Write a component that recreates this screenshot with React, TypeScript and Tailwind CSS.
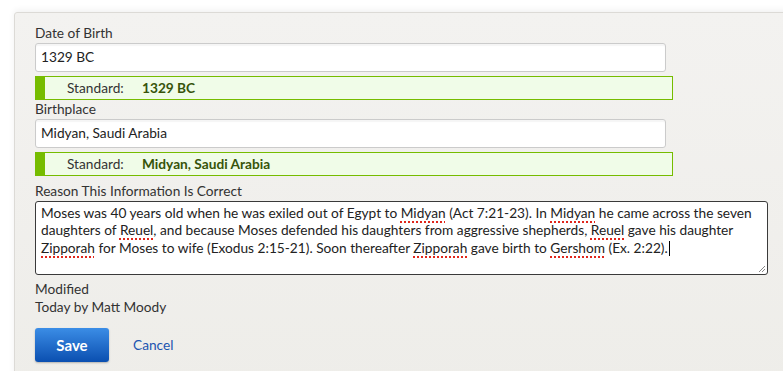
import React from "react";

const font = { fontFamily: "Lato, 'Open Sans', sans-serif" };

function Spell({ children }: { children: React.ReactNode }) {
  return (
    <span className="underline decoration-dotted decoration-[#e0261b] decoration-2 underline-offset-[3px]">
      {children}
    </span>
  );
}

function Standard({ value }: { value: string }) {
  return (
    <div className="flex h-[24px] w-[638px] items-center border border-[#76bc00] bg-[#f0fce8] text-[13.7px]">
      <div className="h-full w-[9px] bg-[#76bc00]" />
      <span className="ml-[22px] w-[75px] text-[#333]">Standard:</span>
      <span className="font-bold text-[#37540a]">{value}</span>
    </div>
  );
}

function TextInput({ value }: { value: string }) {
  return (
    <div className="flex h-[29px] w-[631px] items-center rounded-[3px] border border-[#cbcbcb] bg-white px-[5px] text-[13.7px] text-[#222] shadow-[inset_0_2px_1px_rgba(0,0,0,0.04)]">
      {value}
    </div>
  );
}

export default function App() {
  return (
    <div className="h-[371px] w-[783px] overflow-hidden bg-white pt-[12px] pl-[14px]" style={font}>
      <div className="h-[380px] w-[800px] rounded-tl-[3px] border border-[#dcdad6] bg-gradient-to-b from-[#f3f2f0] to-[#eeede9] pl-[20px] pt-[12px] text-[#333] shadow-[0_-2px_6px_rgba(0,0,0,0.06)]">
        <div className="text-[13.7px] leading-[16px]">Date of Birth</div>
        <div className="mt-[2px]">
          <TextInput value="1329 BC" />
        </div>
        <div className="mt-[4px]">
          <Standard value="1329 BC" />
        </div>
        <div className="mt-px text-[13.7px] leading-[16px]">Birthplace</div>
        <div className="mt-[2px]">
          <TextInput value="Midyan, Saudi Arabia" />
        </div>
        <div className="mt-[4px]">
          <Standard value="Midyan, Saudi Arabia" />
        </div>
        <div className="mt-[7px] text-[13.7px] leading-[16px]">Reason This Information Is Correct</div>
        <div className="relative mt-[2px] h-[74px] w-[733px] rounded-[3px] border border-[#3a3a3a] bg-white px-[5px] pt-[2px] text-[13.7px] leading-[17px] text-[#222]">
          <div className="whitespace-nowrap">
            Moses was 40 years old when he was exiled out of Egypt to <Spell>Midyan</Spell> (Act 7:21-23). In{" "}
            <Spell>Midyan</Spell> he came across the seven
          </div>
          <div className="whitespace-nowrap">
            daughters of <Spell>Reuel</Spell>, and because Moses defended his daughters from aggressive shepherds,{" "}
            <Spell>Reuel</Spell> gave his daughter
          </div>
          <div className="whitespace-nowrap">
            <Spell>Zipporah</Spell> for Moses to wife (Exodus 2:15-21). Soon thereafter <Spell>Zipporah</Spell> gave
            birth to <Spell>Gershom</Spell> (Ex. 2:22).
            <span className="ml-[1px] inline-block h-[15px] w-px translate-y-[3px] bg-black" />
          </div>
          <svg className="absolute right-[1px] bottom-[1px]" width="9" height="9" viewBox="0 0 9 9">
            <path d="M8 2 L2 8 M8 5 L5 8" stroke="#888" strokeWidth="1" />
          </svg>
        </div>
        <div className="mt-[5px] text-[13.7px] leading-[18px]">Modified</div>
        <div className="text-[13.7px] leading-[18px]">Today by Matt Moody</div>
        <div className="mt-[12px] flex items-center">
          <button className="h-[34px] w-[74px] rounded-[3px] bg-gradient-to-b from-[#3b8de6] to-[#0a4fb0] text-[15px] font-bold text-white shadow-[0_1px_2px_rgba(0,0,0,0.25)]">
            Save
          </button>
          <span className="ml-[24px] text-[13.7px] text-[#1d55b0]">Cancel</span>
        </div>
      </div>
    </div>
  );
}
